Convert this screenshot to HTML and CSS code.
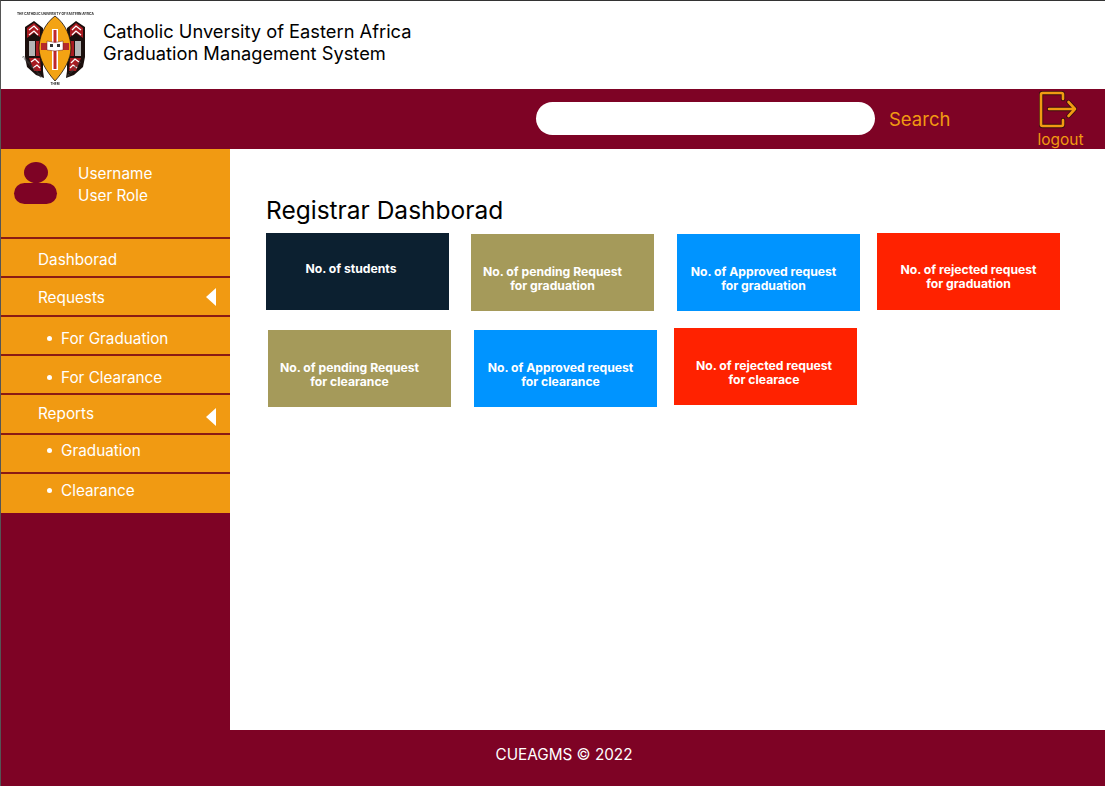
FILE: index.html
```html
<!DOCTYPE html>
<html lang="en">
<head>
    <meta charset="UTF-8">
    <meta name="viewport" content="width=device-width, initial-scale=1.0">
    <title>CUEAGMS - Registrar Dashboard</title>
    <link rel="stylesheet" href="styles.css">
</head>
<body>
    <div class="page">
        <header class="header">
            <svg class="logo" viewBox="0 0 80 76" width="80" height="76">
                <text x="39.500" y="4" class="logo-text" text-anchor="middle" textLength="77" lengthAdjust="spacingAndGlyphs">THE CATHOLIC UNIVERSITY OF EASTERN AFRICA</text>
                <!-- left wing, the right one is the same shape mirrored -->
                <g>
                    <path d="M9 16 L18 10 L27 17 L27 60 L28 67 L20 64 L11 56 L9 46 Z" fill="#1b0f0d"/>
                    <path d="M11 17 L18 12 L24 17 L24 26 L18 22 L11 27 Z" fill="#a81a20"/>
                    <path d="M13 19 L18 15 L22 19 M13 24 L18 20 L22 24" fill="none" stroke="#fff" stroke-width="1.300"/>
                    <path d="M13 30 H19 V45 H13 Z" fill="#b5b5b5"/>
                    <path d="M20 30 H25 V45 H20 Z" fill="#a81a20"/>
                    <path d="M13 47 L24 47 L25 60 L18 60 Z" fill="#a81a20"/>
                    <path d="M15 51 L19 48 L23 52 M17 57 L21 54 L24 57" fill="none" stroke="#fff" stroke-width="1.300"/>
                </g>
                <g transform="translate(78 0) scale(-1 1)">
                    <path d="M9 16 L18 10 L27 17 L27 60 L28 67 L20 64 L11 56 L9 46 Z" fill="#1b0f0d"/>
                    <path d="M11 17 L18 12 L24 17 L24 26 L18 22 L11 27 Z" fill="#a81a20"/>
                    <path d="M13 19 L18 15 L22 19 M13 24 L18 20 L22 24" fill="none" stroke="#fff" stroke-width="1.300"/>
                    <path d="M13 30 H19 V45 H13 Z" fill="#b5b5b5"/>
                    <path d="M20 30 H25 V45 H20 Z" fill="#a81a20"/>
                    <path d="M13 47 L24 47 L25 60 L18 60 Z" fill="#a81a20"/>
                    <path d="M15 51 L19 48 L23 52 M17 57 L21 54 L24 57" fill="none" stroke="#fff" stroke-width="1.300"/>
                </g>
                <path d="M39 5 C28 13 23 27 23 37 C23 48 30 60 39 70 C48 60 55 48 55 37 C55 27 50 13 39 5 Z" fill="#f3a313" stroke="#1b0f0d" stroke-width="0.800"/>
                <path d="M36 18 H42 V59 H36 Z" fill="#fff"/>
                <path d="M37.500 19 H40.500 V58 H37.500 Z" fill="#c0272d"/>
                <path d="M25 32 H53 V39 H25 Z" fill="#b5282c"/>
                <path d="M31 30 L39 31.500 L47 30 V39 L39 40 L31 39 Z" fill="#fff" stroke="#6b1a1c" stroke-width="0.500"/>
                <path d="M34 33 H37 V36 H34 Z M41 33 H44 V36 H41 Z" fill="#333"/>
                <text transform="translate(6 46) rotate(48)" class="logo-motto">CONSECRATE THEM</text>
                <text transform="translate(52 66) rotate(-48)" class="logo-motto">IN THE TRUTH</text>
                <text x="39" y="74" class="logo-text" text-anchor="middle">THEM</text>
            </svg>
            <h1 class="brand">Catholic Unversity of Eastern Africa<br>Graduation Management System</h1>
        </header>

        <div class="topbar">
            <div class="search-box"></div>
            <span class="search-label">Search</span>
            <div class="logout">
                <svg viewBox="0 0 38 38" width="38" height="38" fill="none" stroke-linejoin="round" stroke-linecap="round">
                    <g stroke="#3a0e10" stroke-width="4.400">
                        <path d="M24 8 V3.500 a1.500 1.500 0 0 0 -1.500 -1.500 H3.500 a1.500 1.500 0 0 0 -1.500 1.500 V33.500 a1.500 1.500 0 0 0 1.500 1.500 H22.500 a1.500 1.500 0 0 0 1.500 -1.500 V29"/>
                        <path d="M10 18 H36 M29.500 11 L36 18 L29.500 25"/>
                    </g>
                    <g stroke="#f19a12" stroke-width="2.600">
                        <path d="M24 8 V3.500 a1.500 1.500 0 0 0 -1.500 -1.500 H3.500 a1.500 1.500 0 0 0 -1.500 1.500 V33.500 a1.500 1.500 0 0 0 1.500 1.500 H22.500 a1.500 1.500 0 0 0 1.500 -1.500 V29"/>
                        <path d="M10 18 H36 M29.500 11 L36 18 L29.500 25"/>
                    </g>
                </svg>
                <span>logout</span>
            </div>
        </div>

        <div class="main">
            <aside class="sidebar">
                <div class="user-box">
                    <div class="avatar">
                        <div class="avatar-head"></div>
                        <div class="avatar-body"></div>
                    </div>
                    <div class="user-info">Username<br>User Role</div>
                </div>
                <ul class="menu">
                    <li class="menu-item shift-2">Dashborad</li>
                    <li class="menu-item has-arrow shift-1">Requests</li>
                    <li class="menu-item sub-item shift-3">For Graduation</li>
                    <li class="menu-item sub-item shift-3">For Clearance</li>
                    <li class="menu-item has-arrow reports">Reports</li>
                    <li class="menu-item sub-item up-2">Graduation</li>
                    <li class="menu-item sub-item last-item">Clearance</li>
                </ul>
            </aside>

            <section class="content">
                <h2 class="page-title">Registrar Dashborad</h2>
                <div class="card-row">
                    <div class="card navy">No. of students</div>
                    <div class="card olive">No. of pending Request<br>for graduation</div>
                    <div class="card blue">No. of Approved request<br>for graduation</div>
                    <div class="card red">No. of rejected request<br>for graduation</div>
                </div>
                <div class="card-row second">
                    <div class="card olive">No. of pending Request<br>for clearance</div>
                    <div class="card blue">No. of Approved request<br>for clearance</div>
                    <div class="card red">No. of rejected request<br>for clearace</div>
                </div>
            </section>
        </div>

        <footer class="footer">CUEAGMS © 2022</footer>
    </div>
</body>
</html>
```

FILE: styles.css
```css
* {
    box-sizing: border-box;
}

html, body {
    height: 100%;
}

body {
    margin: 0;
    font-family: 'Inter', 'Liberation Sans', sans-serif;
    background: #7e0325;
    overflow: hidden;
}

.page {
    height: 786px;
    display: flex;
    flex-direction: column;
    border-top: 1px solid #333;
    border-left: 1px solid #555;
}

.header {
    height: 88px;
    background: #fff;
    display: flex;
    align-items: center;
    padding-left: 15px;
}

.logo {
    flex-shrink: 0;
    align-self: flex-start;
    margin: 10px 7px 0 0;
    filter: blur(0.35px);
}

.logo-text {
    font-size: 3px;
    font-weight: 700;
    fill: #222;
}

.logo-motto {
    font-size: 2.800px;
    font-weight: 700;
    fill: #444;
}

.brand {
    margin: 0 0 7px;
    font-size: 18.300px;
    line-height: 22px;
    font-weight: 400;
    color: #000;
}

.topbar {
    height: 60px;
    background: #7e0325;
    display: flex;
    align-items: center;
    padding-left: 535px;
}

.search-box {
    width: 339px;
    height: 33px;
    margin-top: -1px;
    background: #fff;
    border-radius: 17px;
}

.search-label {
    margin-left: 14px;
    font-size: 18.500px;
    color: #f19a12;
}

.logout {
    align-self: flex-start;
    margin-left: 87px;
    padding-top: 2px;
    display: flex;
    flex-direction: column;
    align-items: center;
    color: #f19a12;
    font-size: 15.500px;
    line-height: 18px;
}

.logout svg {
    margin: 0 4px 2px 0;
}

.main {
    flex: 1;
    display: flex;
    min-height: 0;
}

.sidebar {
    width: 229px;
    flex-shrink: 0;
    background: #7e0325;
}

.user-box {
    height: 88px;
    background: #f19a12;
    display: flex;
    padding: 13px 0 0 13px;
    color: #fff;
}

.avatar {
    width: 43px;
}

.avatar-head {
    width: 24px;
    height: 21px;
    margin: 0 auto;
    background: #7e0325;
    border-radius: 50%;
}

.avatar-body {
    height: 21px;
    background: #7e0325;
    border-radius: 11px;
}

.user-info {
    margin: 1px 0 0 21px;
    font-size: 15.300px;
    line-height: 22px;
    color: #fff;
}

.menu {
    list-style: none;
    margin: 0;
    padding: 0;
}

.menu-item {
    height: 39px;
    display: flex;
    align-items: center;
    border-top: 2px solid #8a1a14;
    background: #f19a12;
    color: #fff;
    font-size: 15.300px;
    padding-left: 37px;
    position: relative;
}

/* the labels do not sit quite in the middle of their rows */
.shift-1 {
    padding-top: 1px;
}

.shift-2 {
    padding-top: 3px;
}

.shift-3 {
    padding-top: 5px;
}

.up-2 {
    padding-bottom: 7px;
}

.menu-item.reports {
    height: 40px;
    padding-bottom: 1px;
}

.menu-item.last-item {
    height: 41px;
    padding-bottom: 6px;
}

.menu-item.sub-item {
    padding-left: 46px;
}

.menu-item.sub-item::before {
    content: "";
    width: 5px;
    height: 5px;
    margin-right: 9px;
    background: #fff;
    border-radius: 50%;
}

.menu-item.has-arrow::after {
    content: "";
    position: absolute;
    right: 14px;
    top: 10px;
    border-top: 9.500px solid transparent;
    border-bottom: 9.500px solid transparent;
    border-right: 10px solid #fff;
}

.menu-item.reports::after {
    top: 13px;
}

.content {
    flex: 1;
    background: #fff;
    padding: 47px 0 0 36px;
}

.page-title {
    margin: 0 0 8px;
    font-size: 24.500px;
    line-height: 29px;
    font-weight: 400;
    color: #000;
}

.card-row {
    display: flex;
    align-items: flex-start;
}

.card-row.second {
    margin: 18px 0 0 2px;
}

.card {
    width: 183px;
    height: 77px;
    flex-shrink: 0;
    display: flex;
    align-items: center;
    justify-content: center;
    text-align: center;
    font-size: 12.200px;
    line-height: 14px;
    font-weight: 700;
    color: #fff;
}

.navy {
    background: #0c2030;
    padding: 0 13px 5px 0;
}

.olive {
    background: #a59a5a;
    margin: 1px 0 0 22px;
    padding: 13px 20px 0 0;
}

.blue {
    background: #0094ff;
    margin: 1px 0 0 23px;
    padding: 12px 10px 0 0;
}

.red {
    background: #ff2200;
    margin-left: 17px;
    padding-top: 11px;
}

.second .olive {
    margin-left: 0;
}

.second .red {
    margin-top: -1px;
    padding: 13px 3px 0 0;
}

.footer {
    height: 56px;
    background: #7e0325;
    color: #fff;
    font-size: 15.300px;
    text-align: center;
    line-height: 49px;
    padding-left: 22px;
}
```
